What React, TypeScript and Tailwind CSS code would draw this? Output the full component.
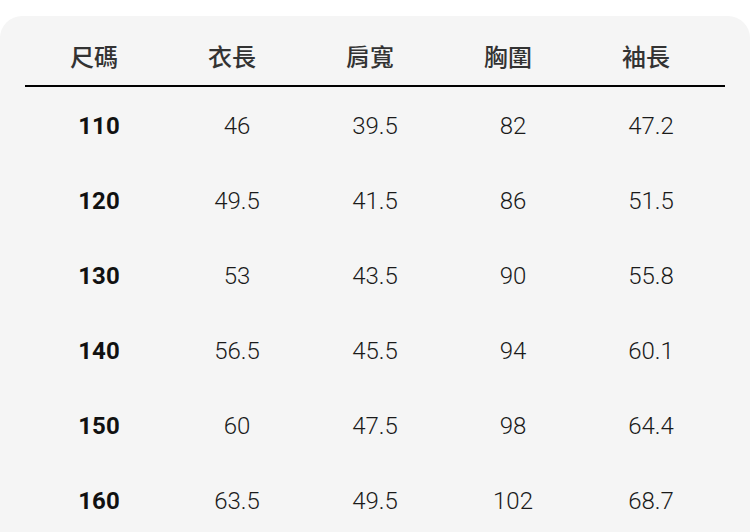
const headers = ["尺碼", "衣長", "肩寬", "胸圍", "袖長"];

const rows = [
  ["110", "46", "39.5", "82", "47.2"],
  ["120", "49.5", "41.5", "86", "51.5"],
  ["130", "53", "43.5", "90", "55.8"],
  ["140", "56.5", "45.5", "94", "60.1"],
  ["150", "60", "47.5", "98", "64.4"],
  ["160", "63.5", "49.5", "102", "68.7"],
];

export default function App() {
  return (
    <div className="w-[750px] h-[532px] bg-white overflow-hidden pt-4">
      <div className="h-full bg-[#f5f5f5] rounded-t-[22px] px-[25px]">
        {/* Header */}
        <div className="grid grid-cols-5 h-[69px] pt-[11px] px-[5px] items-center">
          {headers.map((h) => (
            <div
              key={h}
              className="text-center pr-[10px] text-[24px] font-medium text-[#333] font-['Noto_Sans_CJK_TC',sans-serif]"
            >
              {h}
            </div>
          ))}
        </div>
        <div className="h-[2px] bg-black" />

        {/* Rows */}
        <div className="pt-[1px] px-[5px]">
          {rows.map((r) => (
            <div key={r[0]} className="grid grid-cols-5 h-[75px] items-center font-['Roboto',sans-serif] text-[24px]">
              {r.map((c, i) => (
                <div
                  key={i}
                  className={
                    i === 0
                      ? "text-center font-bold text-[#111]"
                      : "text-center font-light text-[#1a1a1a]"
                  }
                >
                  {c}
                </div>
              ))}
            </div>
          ))}
        </div>
      </div>
    </div>
  );
}
